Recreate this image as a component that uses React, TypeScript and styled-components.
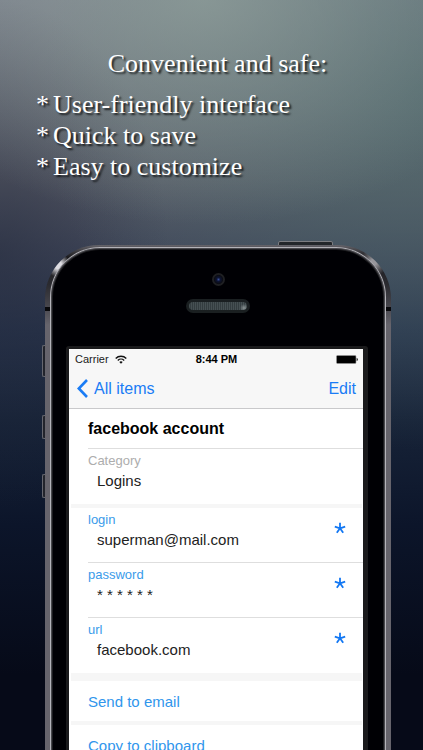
import React from "react";
import styled, { createGlobalStyle } from "styled-components";

const GlobalStyle = createGlobalStyle`
  * { box-sizing: border-box; }
  body { margin: 0; background: #060a18; }
  button { font: inherit; border: 0; background: none; padding: 0; cursor: pointer; }
`;

const Page = styled.main`
  height: 100vh;
  overflow: hidden;
  display: flex;
  flex-direction: column;
  background:
    radial-gradient(ellipse 80% 30% at 48% 0%, rgba(144, 160, 155, 0.75), rgba(144, 160, 155, 0) 100%),
    radial-gradient(ellipse 90% 48% at 100% 12%, rgba(78, 106, 108, 0.75), rgba(78, 106, 108, 0) 100%),
    radial-gradient(ellipse 40% 34% at 0% 34%, rgba(34, 40, 58, 0.55), rgba(34, 40, 58, 0) 100%),
    linear-gradient(180deg, #7a7f8b 0%, #686c77 14%, #595c68 24%, #40475a 34%, #28344c 44%, #172338 56%, #0c152a 70%, #060a18 90%);
  font-family: "Liberation Sans", Arial, sans-serif;
`;

const Pitch = styled.header`
  padding: 48px 36px 0;
  color: #fff;
  font-family: "Liberation Serif", "Times New Roman", serif;
  font-size: 26px;
  line-height: 31px;
  text-shadow: 2px 2px 2px rgba(0, 0, 0, 0.75);
`;

const Headline = styled.h1`
  margin: 0 0 10px 12px;
  font: inherit;
  text-align: center;
`;

const Points = styled.ul`
  margin: 0;
  padding: 0;
  list-style: none;
`;

const Point = styled.li`
  display: flex;
  gap: 4px;
  &::before { content: "*"; }
`;

const Phone = styled.section`
  position: relative;
  flex: 1 0 auto;
  display: flex;
  margin: 63px 32px 0 45px;
`;

const SideKey = styled.span<{ $top: number; $height: number }>`
  position: absolute;
  left: -3px;
  top: ${(p) => p.$top}px;
  width: 4px;
  height: ${(p) => p.$height}px;
  border: 1px solid #66676f;
  border-right: 0;
  border-radius: 2px 0 0 2px;
  background: #22242c;
`;

const PowerKey = styled.span`
  position: absolute;
  top: -4px;
  right: 58px;
  width: 55px;
  height: 6px;
  border: 1px solid #7b7c80;
  border-radius: 2px 2px 0 0;
  background: #22262a;
`;

const Rim = styled.div`
  position: relative;
  flex: 1;
  display: flex;
  padding: 2px 5px 0;
  border-radius: 54px 54px 0 0;
  background:
    linear-gradient(180deg, transparent 62px, #08080b 62px, #08080b 66px, transparent 66px),
    radial-gradient(circle 12px at 13px 20px, #dddce2 30%, transparent),
    radial-gradient(circle 14px at calc(100% - 17px) 17px, #98979c 20%, transparent),
    linear-gradient(180deg, #66656b 0, #4c4b50 4px, #1b1b1f 12px, #2b2b30 40px, #48474e 62px, #66646c 80px, #66646c 100%);
`;

const Glass = styled.div`
  flex: 1;
  display: flex;
  flex-direction: column;
  border: 1px solid #b4b3b9;
  border-bottom: 0;
  border-radius: 50px 50px 0 0;
  background: #000004;
  box-shadow: inset 0 0 0 1px #48484c, inset 0 0 0 2px #1c1c20;
`;

const Earpiece = styled.div`
  height: 98px;
  flex: none;
  display: flex;
  flex-direction: column;
  align-items: center;
  gap: 13px;
  padding-top: 25px;
`;

const Camera = styled.span`
  width: 13px;
  height: 13px;
  border-radius: 50%;
  background: radial-gradient(circle, #3a4f9a 0, #0d1433 20%, #0b0c14 45%, #1f2023 55%, #1c1c1f 100%);
`;

const Speaker = styled.span`
  width: 64px;
  height: 14px;
  border: 3px solid #1a1f21;
  border-radius: 7px;
  background:
    radial-gradient(circle 4px at 55px 6px, #8a9394, transparent),
    repeating-linear-gradient(90deg, #465053 0 1px, #343d40 1px 2px);
`;

const Bezel = styled.div`
  flex: 1;
  display: flex;
  margin: 0 17px 0 15px;
  padding: 3px 5px 0 3px;
  border-radius: 3px 3px 0 0;
  background: #1a1a1c;
`;

const Screen = styled.div`
  flex: 1;
  min-width: 0;
  background: #fff;
  color: #222;
`;

const TopBar = styled.div`
  background: #f7f7f7;
  border-bottom: 1px solid #c9c9cb;
`;

const StatusBar = styled.div`
  display: grid;
  grid-template-columns: 1fr auto 1fr;
  align-items: center;
  height: 20px;
  padding: 0 5px 0 6px;
  color: #1a1a1a;
  font-size: 11px;
`;

const Carrier = styled.span`
  display: flex;
  align-items: center;
  gap: 6px;
`;

const Time = styled.time`
  color: #000;
  font-weight: 700;
`;

const BatterySlot = styled.span`
  display: flex;
  justify-content: flex-end;
`;

const NavBar = styled.nav`
  display: flex;
  justify-content: space-between;
  align-items: center;
  height: 39px;
  padding: 0 7px 0 8px;
`;

const NavButton = styled.button`
  display: flex;
  align-items: center;
  gap: 6px;
  color: #1a7cf5;
`;

const Title = styled.h2`
  margin: 0 0 0 19px;
  border-bottom: 1px solid #dedede;
  color: #000;
  font-size: 16px;
  line-height: 39px;
`;

const Group = styled.dl`
  margin: 0;
`;

const Field = styled.div<{ $divided?: boolean }>`
  display: grid;
  grid-template-columns: 1fr auto;
  align-content: start;
  align-items: start;
  height: 55px;
  margin-left: 19px;
  padding: 4px 17px 0 0;
  border-bottom: ${(p) => (p.$divided ? "1px solid #dedede" : "0")};
`;

const Label = styled.dt<{ $muted?: boolean }>`
  grid-column: 1;
  color: ${(p) => (p.$muted ? "#adadad" : "#3a9bea")};
  font-size: 13px;
  line-height: 16px;
`;

const Value = styled.dd`
  grid-column: 1;
  margin: 0 0 0 9px;
  font-size: 15px;
  line-height: 24px;
`;

const Reveal = styled.button`
  grid-column: 2;
  grid-row: 1 / 3;
  display: flex;
  padding-top: 10px;
`;

const Band = styled.div<{ $height: number }>`
  height: ${(p) => p.$height}px;
  margin: 0 1px 0 2px;
  background: #f6f6f6;
`;

const Action = styled.button`
  display: block;
  width: 100%;
  height: 40px;
  padding-left: 19px;
  color: #3096ec;
  font-size: 15px;
  text-align: left;
`;

const Wifi = () => (
  <svg width="12" height="9" viewBox="0 0 12 9" fill="none" stroke="#111" strokeWidth="1.4" aria-hidden="true">
    <path d="M0.7 3.4C3.6 0.5 8.4 0.5 11.3 3.4" />
    <path d="M2.8 5.4C4.6 3.7 7.4 3.7 9.2 5.4" />
    <path d="M6 8.8L4.3 7C5.2 6.1 6.8 6.1 7.7 7Z" fill="#111" stroke="none" />
  </svg>
);

const Battery = () => (
  <svg width="22" height="9" viewBox="0 0 22 9" aria-label="Battery full">
    <rect x="0.5" y="0.5" width="19.5" height="8" rx="1" fill="#000" stroke="#999" strokeWidth="0.6" />
    <path d="M20.7 3C22.1 3.4 22.1 5.6 20.7 6Z" fill="#000" />
  </svg>
);

const Chevron = () => (
  <svg width="11" height="19" viewBox="0 0 11 19" fill="none" stroke="#1a7cf5" strokeWidth="2.6" aria-hidden="true">
    <path d="M10 1L1.8 9.5L10 18" />
  </svg>
);

const Star = () => (
  <svg width="12" height="12" viewBox="0 0 12 12" fill="none" stroke="#1277f3" strokeWidth="1.8" aria-hidden="true">
    <path d="M6 6.3V0.8M6 6.3L0.8 4.6M6 6.3L11.2 4.6M6 6.3L2.8 10.8M6 6.3L9.2 10.8" />
  </svg>
);

const points = ["User-friendly interface", "Quick to save", "Easy to customize"];

const fields = [
  { label: "login", value: "superman@mail.com" },
  { label: "password", value: "* * * * * *" },
  { label: "url", value: "facebook.com" },
];

export default function App() {
  return (
    <Page>
      <GlobalStyle />
      <Pitch>
        <Headline>Convenient and safe:</Headline>
        <Points>
          {points.map((point) => (
            <Point key={point}>{point}</Point>
          ))}
        </Points>
      </Pitch>
      <Phone>
        <PowerKey />
        <SideKey $top={100} $height={32} />
        <SideKey $top={170} $height={24} />
        <SideKey $top={229} $height={24} />
        <Rim>
          <Glass>
            <Earpiece>
              <Camera />
              <Speaker />
            </Earpiece>
            <Bezel>
              <Screen>
                <TopBar>
                  <StatusBar>
                    <Carrier>
                      Carrier
                      <Wifi />
                    </Carrier>
                    <Time>8:44 PM</Time>
                    <BatterySlot>
                      <Battery />
                    </BatterySlot>
                  </StatusBar>
                  <NavBar>
                    <NavButton type="button">
                      <Chevron />
                      All items
                    </NavButton>
                    <NavButton type="button">Edit</NavButton>
                  </NavBar>
                </TopBar>
                <Title>facebook account</Title>
                <Group>
                  <Field>
                    <Label $muted>Category</Label>
                    <Value>Logins</Value>
                  </Field>
                </Group>
                <Band $height={4} />
                <Group>
                  {fields.map((field, index) => (
                    <Field key={field.label} $divided={index < fields.length - 1}>
                      <Label>{field.label}</Label>
                      <Value>{field.value}</Value>
                      <Reveal type="button" aria-label={`Show ${field.label}`}>
                        <Star />
                      </Reveal>
                    </Field>
                  ))}
                </Group>
                <Band $height={8} />
                <Action type="button">Send to email</Action>
                <Band $height={4} />
                <Action type="button">Copy to clipboard</Action>
              </Screen>
            </Bezel>
          </Glass>
        </Rim>
      </Phone>
    </Page>
  );
}
